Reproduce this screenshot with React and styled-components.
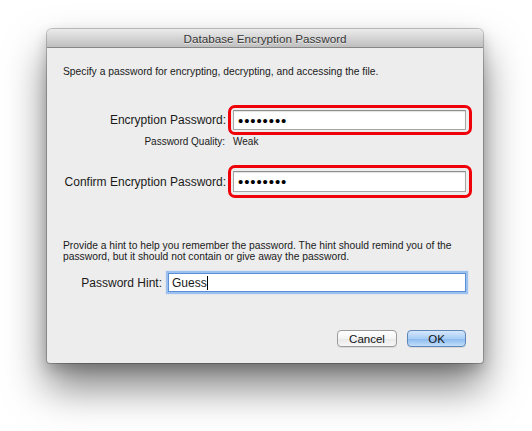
import styled, { createGlobalStyle } from 'styled-components';

const GlobalStyle = createGlobalStyle`
    html, body {
        margin: 0;
        padding: 0;
        background: #ffffff;
        font-family: "Liberation Sans", Arial, sans-serif;
    }
    * { box-sizing: border-box; }
`;

const Page = styled.div`
    width: 532px;
    height: 431px;
    padding: 29px 0 0 47px;
    overflow: hidden;
`;

const Window = styled.div`
    width: 436px;
    height: 334px;
    display: flex;
    flex-direction: column;
    background: #ededed;
    border-radius: 5px 5px 3px 3px;
    box-shadow: 0 0 0 1px rgba(0, 0, 0, 0.22), 0 24px 40px rgba(0, 0, 0, 0.5),
        0 6px 14px rgba(0, 0, 0, 0.2);
    overflow: hidden;
`;

const TitleBar = styled.div`
    height: 19px;
    display: flex;
    align-items: center;
    justify-content: center;
    background: linear-gradient(#ebebeb, #d0d0d0 60%, #bfbfbf);
    border-bottom: 1px solid #878787;
    font-size: 11.7px;
    color: #363636;
    text-shadow: 0 1px 0 rgba(255, 255, 255, 0.6);
`;

const Content = styled.div`
    flex: 1;
    display: flex;
    flex-direction: column;
    padding: 18px 11px 16px 16px;
    color: #1a1a1a;
`;

const Note = styled.p`
    margin: ${(p) => p.$top || 0}px 0 0;
    font-size: 10.3px;
    line-height: ${(p) => p.$lh || 12}px;
`;

const Row = styled.div`
    display: flex;
    align-items: center;
    margin-top: ${(p) => p.$top || 0}px;
`;

const Label = styled.div`
    flex: none;
    width: ${(p) => p.$width}px;
    padding-right: ${(p) => p.$pad || 2}px;
    text-align: right;
    white-space: nowrap;
    font-size: ${(p) => p.$size || 12}px;
    line-height: 12px;
`;

const Value = styled.div`
    font-size: 10px;
    line-height: 12px;
    margin-left: 5px;
`;

const Highlight = styled.div`
    flex: 1;
    border: 3px solid #f00008;
    border-radius: 7px;
    padding: ${(p) => p.$pad || 2}px 3px ${(p) => p.$pad || 2}px 2px;
`;

const Field = styled.div`
    height: ${(p) => p.$h || 20}px;
    display: flex;
    align-items: center;
    padding-left: 4px;
    background: #ffffff;
    border: 1px solid #a6a6a6;
    border-top-color: #8e8e8e;
    box-shadow: inset 0 1px 1px rgba(0, 0, 0, 0.12);
    font-size: 12px;
`;

const Dots = styled.span`
    font-size: 15px;
    letter-spacing: 0.9px;
    line-height: 1;
    color: #000;
`;

const FocusField = styled(Field)`
    flex: 1;
    margin-right: 6px;
    border: 1px solid #5a8fd8;
    box-shadow: 0 0 1px 2px #9cc1ee;
    padding-left: 3px;
`;

const Caret = styled.span`
    display: inline-block;
    width: 1px;
    height: 14px;
    background: #000;
`;

const Buttons = styled.div`
    display: flex;
    justify-content: flex-end;
    gap: 10px;
    margin-top: 38px;
    padding-right: 6px;
`;

const Button = styled.div`
    width: ${(p) => p.$w}px;
    height: 17px;
    display: flex;
    align-items: center;
    justify-content: center;
    border-radius: 4px;
    font-size: 11.5px;
    color: #111;
    border: 1px solid ${(p) => (p.$primary ? '#5f86b8' : '#9b9b9b')};
    background: ${(p) =>
        p.$primary
            ? 'linear-gradient(#d6e8fc, #a9cdf5 50%, #8dbcf0 55%, #c2def9)'
            : 'linear-gradient(#ffffff, #f4f4f4 50%, #e9e9e9 55%, #f7f7f7)'};
    box-shadow: 0 1px 0 rgba(0, 0, 0, 0.08);
`;

function App() {
    return (
        <Page>
            <GlobalStyle />
            <Window>
                <TitleBar>Database Encryption Password</TitleBar>
                <Content>
                    <Note>Specify a password for encrypting, decrypting, and accessing the file.</Note>

                    <Row $top={27}>
                        <Label $width={165}>Encryption Password:</Label>
                        <Highlight>
                            <Field>
                                <Dots>••••••••</Dots>
                            </Field>
                        </Highlight>
                    </Row>

                    <Row $top={1}>
                        <Label $width={165} $pad={3} $size={10}>
                            Password Quality:
                        </Label>
                        <Value>Weak</Value>
                    </Row>

                    <Row $top={17}>
                        <Label $width={165}>Confirm Encryption Password:</Label>
                        <Highlight $pad={3}>
                            <Field $h={21}>
                                <Dots>••••••••</Dots>
                            </Field>
                        </Highlight>
                    </Row>

                    <Note $top={42} $lh={11}>
                        Provide a hint to help you remember the password. The hint should remind you of the
                        password, but it should not contain or give away the password.
                    </Note>

                    <Row $top={11}>
                        <Label $width={105} $pad={6}>
                            Password Hint:
                        </Label>
                        <FocusField $h={19}>
                            Guess
                            <Caret />
                        </FocusField>
                    </Row>

                    <Buttons>
                        <Button $w={60}>Cancel</Button>
                        <Button $w={59} $primary>
                            OK
                        </Button>
                    </Buttons>
                </Content>
            </Window>
        </Page>
    );
}

export default App;
